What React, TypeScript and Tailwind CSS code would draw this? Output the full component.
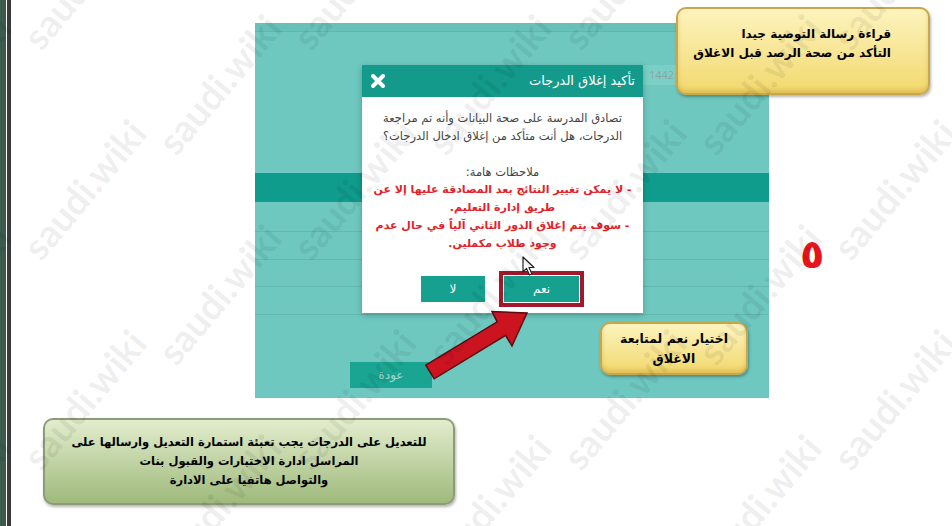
import React from 'react';

const arabic = { fontFamily: '"DejaVu Sans", sans-serif' };

// watermark centers (approximate lattice over the slide)
const marks: [number, number][] = [];
for (let r = 0; r < 6; r++) {
  const y = -20 + r * 105;
  const start = r % 2 === 0 ? 110 : -25;
  for (let x = start; x < 1050; x += 270) marks.push([x, y]);
}

const Watermarks = () => (
  <div className="pointer-events-none absolute inset-0 overflow-hidden">
    {marks.map(([x, y], i) => (
      <span
        key={i}
        className="absolute whitespace-nowrap text-[38px] font-bold leading-none text-black/[0.08]"
        style={{ left: x - 110, top: y - 20, transform: 'rotate(-50deg)', fontFamily: 'Lato, sans-serif' }}
      >
        saudi.wiki
      </span>
    ))}
  </div>
);

const Cursor = () => (
  <svg className="absolute left-[160px] top-[159px]" width="13" height="20" viewBox="0 0 13 20">
    <path d="M1 1 L1 16 L4.5 12.5 L7.5 19 L10 18 L7 11.5 L12 11.5 Z" fill="#fff" stroke="#222" strokeWidth="1.2" strokeLinejoin="round" />
  </svg>
);

const Dialog = () => (
  <div className="absolute left-[107px] top-[42px] flex h-[248px] w-[281px] flex-col bg-white shadow-[0_2px_6px_rgba(0,0,0,0.25)]">
    <div className="flex h-[32px] items-center justify-between bg-[#139a8a] px-[8px]" dir="rtl">
      <span className="text-[13px] text-white" style={arabic}>تأكيد إغلاق الدرجات</span>
      <svg width="16" height="16" viewBox="0 0 16 16">
        <path d="M3 3 L13 13 M13 3 L3 13" stroke="#fff" strokeWidth="4" strokeLinecap="round" />
      </svg>
    </div>
    <div className="relative flex flex-1 flex-col items-center whitespace-nowrap pt-[12px]" dir="rtl" style={arabic}>
      <p className="text-center text-[11.5px] leading-[18px] text-[#444]">
        تصادق المدرسة على صحة البيانات وأنه تم مراجعة
        <br />
        الدرجات، هل أنت متأكد من إغلاق ادخال الدرجات؟
      </p>
      <p className="mt-[18px] text-center text-[11.5px] leading-[18px] text-[#444]">ملاحظات هامة:</p>
      <p className="text-center text-[11px] font-semibold leading-[18px] text-[#e2232a]">
        - لا يمكن تغيير النتائج بعد المصادقة عليها إلا عن
        <br />
        طريق إدارة التعليم.
        <br />
        - سوف يتم إغلاق الدور الثاني آلياً في حال عدم
        <br />
        وجود طلاب مكملين.
      </p>
      <Cursor />
      <div className="mt-[18px] flex items-center gap-[14px]">
        <div className="border-[4px] border-[#a3192b] p-[1px]">
          <div className="flex h-[26px] w-[75px] items-center justify-center bg-[#16a090] text-[12px] text-white">نعم</div>
        </div>
        <div className="flex h-[26px] w-[64px] items-center justify-center bg-[#16a090] text-[12px] text-white">لا</div>
      </div>
    </div>
  </div>
);

const Panel = () => (
  <div className="relative flex h-[375px] w-[514px] flex-col bg-[#6ec8bf]">
    <div className="h-[9px] border-b border-[#5fb7ae] bg-[#67c1b8]" />
    <div className="mt-[33px] flex h-[20px] justify-end">
      <div className="flex w-[126px] items-center bg-[#7ccfc6] pl-[6px] text-[11px] text-[#8aa7a3]" style={{ fontFamily: '"Open Sans", sans-serif' }}>
        1442
      </div>
    </div>
    <div className="mt-[88px] h-[29px] bg-[#0f9c8c]" />
    <div className="h-[30px] border-b border-[#62b7ae]" />
    <div className="h-[28px] border-b border-[#62b7ae]" />
    <div className="h-[27px] border-b border-[#62b7ae]" />
    <div className="h-[28px] border-b border-[#62b7ae]" />
    <div className="ml-[95px] mt-[47px] flex h-[26px] w-[82px] items-center justify-center bg-[#1aa593] text-[12px] text-[#9fd8d0]" style={arabic}>
      عودة
    </div>
    <Dialog />
  </div>
);

const Arrow = () => (
  <svg className="absolute left-[420px] top-[300px]" width="115" height="90" viewBox="0 0 115 90">
    <polygon
      points="5.8,65.2 77.2,21.8 72,11.5 107,13 92,46 85.6,35.4 14.2,78.8"
      fill="#cc1420"
      stroke="#5a0a10"
      strokeWidth="1.5"
      strokeLinejoin="miter"
    />
  </svg>
);

const yellowBox =
  'absolute rounded-[10px] border-[2px] border-[#c9a64a] bg-gradient-to-b from-[#fdf4bd] to-[#f2d86c] shadow-[1px_2px_3px_rgba(0,0,0,0.3),inset_0_-3px_4px_rgba(180,140,40,0.35)]';

export default function App() {
  return (
    <div className="relative flex h-[526px] w-[952px] overflow-hidden bg-white">
      <div className="flex h-full shrink-0">
        <div className="w-[6px] bg-[#3d5a4e]" />
        <div className="w-[1px] bg-white" />
        <div className="w-[4px] bg-[#3b3b3b]" />
      </div>

      <div className="flex flex-col pt-[23px]">
        <div className="ml-[244px]">
          <Panel />
        </div>
        <div className="ml-[32px] mt-[20px] flex h-[87px] w-[412px] items-center justify-center rounded-[10px] border-[2px] border-[#8d9c78] bg-gradient-to-b from-[#e3edcd] to-[#9fba7c] shadow-[1px_2px_3px_rgba(0,0,0,0.3)]">
          <p className="whitespace-nowrap text-center text-[11.5px] font-bold leading-[19px] text-black" dir="rtl" style={arabic}>
            للتعديل على الدرجات يجب تعبئة استمارة التعديل وارسالها على
            <br />
            المراسل ادارة الاختبارات والقبول بنات
            <br />
            والتواصل هاتفيا على الادارة
          </p>
        </div>
      </div>

      <div className={`${yellowBox} left-[676px] top-[7px] h-[88px] w-[254px] pr-[37px] pt-[16px]`}>
        <p className="whitespace-nowrap text-right text-[12px] font-bold leading-[19px] text-black" dir="rtl" style={arabic}>
          قراءة رسالة التوصية جيدا
          <br />
          التأكد من صحة الرصد قبل الاغلاق
        </p>
      </div>

      <div className={`${yellowBox} left-[600px] top-[322px] flex h-[53px] w-[148px] items-center justify-center`}>
        <p className="whitespace-nowrap text-center text-[12.5px] font-bold leading-[20px] text-black" dir="rtl" style={arabic}>
          اختيار نعم لمتابعة
          <br />
          الاغلاق
        </p>
      </div>

      <Arrow />

      <span className="absolute left-[800px] top-[234px] text-[40px] font-bold leading-none text-[#e8141c]" style={arabic}>
        ٥
      </span>

      <Watermarks />
    </div>
  );
}
